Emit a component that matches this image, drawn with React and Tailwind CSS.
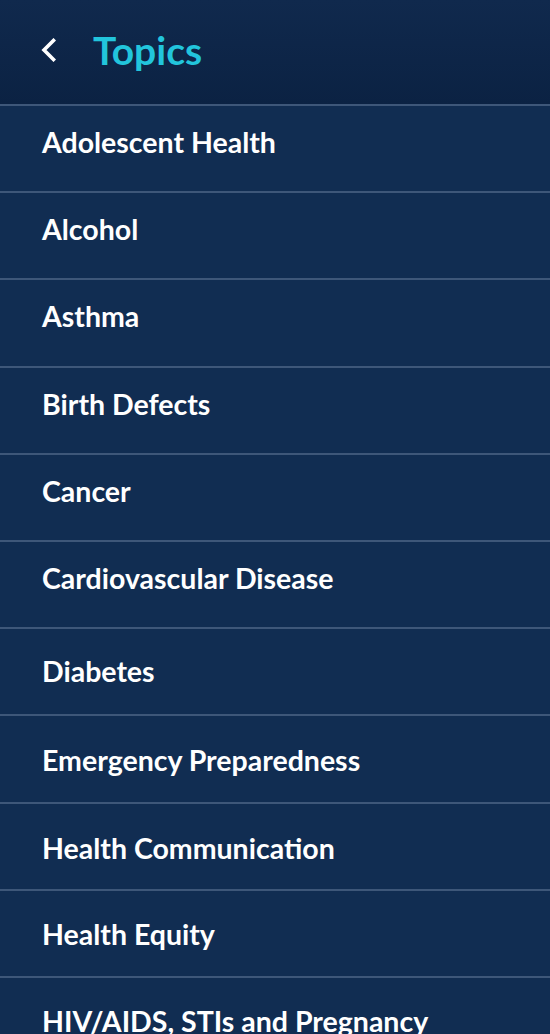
import React from 'react';

// pad = offset of the label inside its row
const topics = [
  { label: 'Adolescent Health', pad: 'pt-[19px]' },
  { label: 'Alcohol', pad: 'pt-[19px]' },
  { label: 'Asthma', pad: 'pt-[19px]' },
  { label: 'Birth Defects', pad: 'pt-[19px]' },
  { label: 'Cancer', pad: 'pt-[19px]' },
  { label: 'Cardiovascular Disease', pad: 'pt-[19px]' },
  { label: 'Diabetes', pad: 'pt-[25px]' },
  { label: 'Emergency Preparedness', pad: 'pt-[27px]' },
  { label: 'Health Communication', pad: 'pt-[27px]' },
  { label: 'Health Equity', pad: 'pt-[26px]' },
  { label: 'HIV/AIDS, STIs and Pregnancy', pad: 'pt-[26px]' },
  { label: 'Immunization', pad: 'pt-[26px]' },
];

const ChevronLeft = () => (
  <svg width="16" height="24" viewBox="0 0 16 24" fill="none">
    <path d="M13.5 2.5 L4 12 L13.5 21.5" stroke="#ffffff" strokeWidth="3.6" strokeLinecap="square" />
  </svg>
);

export default function App() {
  return (
    <div className="h-[1034px] w-[550px] overflow-hidden bg-[#112d52] font-['Lato','Liberation_Sans',sans-serif]">
      <header className="flex h-[104px] items-center bg-gradient-to-b from-[#10294d] to-[#0b2243] pb-1">
        <button className="ml-[40px] mr-[37px] flex items-center">
          <ChevronLeft />
        </button>
        <h1 className="text-[39px] font-bold leading-none text-[#22c5dc]">Topics</h1>
      </header>
      <ul>
        {topics.map(t => (
          <li
            key={t.label}
            className={`h-[87.2px] whitespace-nowrap border-t-2 border-[#3e5779] pl-[42px] text-[28.5px] font-bold leading-[34px] text-white ${t.pad}`}
          >
            {t.label}
          </li>
        ))}
      </ul>
    </div>
  );
}
